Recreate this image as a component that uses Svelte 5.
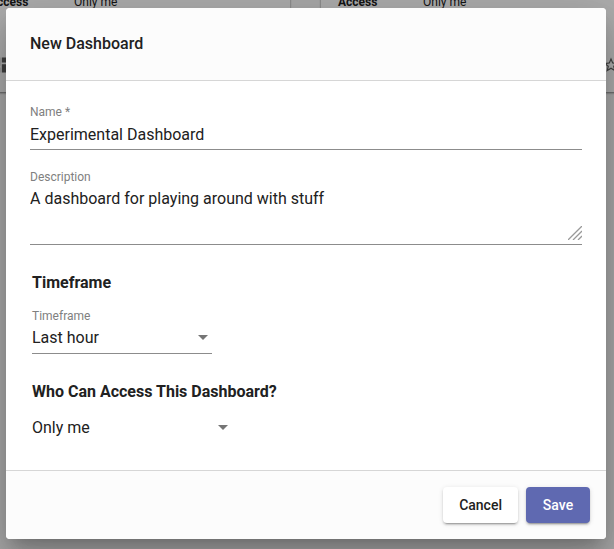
<script>
  let name = $state('Experimental Dashboard');
  let description = $state('A dashboard for playing around with stuff');
  let timeframe = $state('Last hour');
  let access = $state('Only me');
  const cards = [1, 2];
</script>

<div class="page">
  <div class="behind" aria-hidden="true">
    {#each cards as card (card)}
      <article>
        <dl><dt>Access</dt><dd>Only me</dd></dl>
        <footer>
          <svg width="20" height="20" viewBox="0 0 24 24"><path d="M3 13h8V3H3v10zm0 8h8v-6H3v6zm10 0h8V11h-8v10zm0-18v6h8V3h-8z" /></svg>
          <svg width="18" height="18" viewBox="0 0 24 24"><path d="M22 9.24l-7.19-.62L12 2 9.19 8.63 2 9.24l5.46 4.73L5.82 21 12 17.27 18.18 21l-1.63-7.03L22 9.24zM12 15.4l-3.76 2.27 1-4.28-3.32-2.88 4.38-.38L12 6.1l1.71 4.04 4.38.38-3.32 2.88 1 4.28L12 15.4z" /></svg>
        </footer>
      </article>
    {/each}
  </div>

  <div class="scrim">
    <form class="dialog" role="dialog" aria-labelledby="title" onsubmit={(e) => e.preventDefault()}>
      <header><h1 id="title">New Dashboard</h1></header>
      <div class="body">
        <div class="field">
          <label for="name">Name *</label>
          <input id="name" type="text" required bind:value={name} />
        </div>
        <div class="field area">
          <label for="description">Description</label>
          <textarea id="description" bind:value={description}></textarea>
          <svg class="grip" width="14" height="14" viewBox="0 0 14 14"><path d="M0 14L14 0M5 14l9-9M10 14l4-4" /></svg>
        </div>
        <section>
          <h2>Timeframe</h2>
          <div class="field select">
            <label for="timeframe">Timeframe</label>
            <select id="timeframe" bind:value={timeframe}>
              <option>Last hour</option>
              <option>Last day</option>
              <option>Last week</option>
            </select>
            <svg class="arrow" width="10" height="5" viewBox="0 0 10 5"><path d="M0 0h10L5 5z" /></svg>
          </div>
        </section>
        <section class="access">
          <h2 id="access-title">Who Can Access This Dashboard?</h2>
          <div class="field select plain">
            <select aria-labelledby="access-title" bind:value={access}>
              <option>Only me</option>
              <option>Everyone</option>
            </select>
            <svg class="arrow" width="10" height="5" viewBox="0 0 10 5"><path d="M0 0h10L5 5z" /></svg>
          </div>
        </section>
      </div>
      <div class="actions">
        <button type="button">Cancel</button>
        <button type="submit" class="primary">Save</button>
      </div>
    </form>
  </div>
</div>

<style>
  :global(body) { margin: 0; background: #fafafa; }
  .page, .page * { box-sizing: border-box; }
  .page {
    position: relative;
    min-height: 100vh;
    overflow: hidden;
    font-family: Roboto, 'Liberation Sans', sans-serif;
    color: #212121;
  }
  .behind {
    position: absolute;
    inset: -8px 0 auto -28px;
    display: flex;
    gap: 31px;
  }
  article {
    flex: none;
    width: 318px;
    background: #fff;
    box-shadow: 0 1px 2px rgba(0, 0, 0, 0.5);
  }
  dl { display: flex; margin: 0; padding: 2px 17px 0; font-size: 12px; line-height: 16px; }
  dt { width: 85px; font-weight: 700; }
  dd { margin: 0; }
  article footer {
    display: flex;
    justify-content: space-between;
    align-items: center;
    height: 82px;
    padding: 28px 19px 0;
  }
  article footer svg { fill: #616161; }
  .scrim {
    position: relative;
    display: flex;
    align-items: center;
    justify-content: center;
    min-height: 100vh;
    padding: 8px 8px 10px 6px;
    background: rgba(0, 0, 0, 0.32);
  }
  .dialog {
    width: 100%;
    max-width: 600px;
    border-radius: 4px;
    background: #fff;
    overflow: hidden;
    box-shadow: 0 11px 15px -7px rgba(0, 0, 0, 0.2), 0 24px 38px 3px rgba(0, 0, 0, 0.14), 0 9px 46px 8px rgba(0, 0, 0, 0.12);
  }
  header { padding: 24px; background: #fcfcfc; border-bottom: 1px solid #d6d6d6; }
  h1 { margin: 0; font-size: 16px; font-weight: 500; line-height: 24px; }
  .body { padding: 24px 24px 26px; }
  .field { position: relative; }
  label { display: block; font-size: 12px; line-height: 14px; color: #808080; }
  input, textarea, select {
    display: block;
    width: 100%;
    margin: 0;
    padding: 0;
    border: 0;
    border-bottom: 1px solid #8c8c8c;
    border-radius: 0;
    outline: 0;
    background: transparent;
    color: inherit;
    font: 16px/24px Roboto, 'Liberation Sans', sans-serif;
  }
  input, select { height: 31px; }
  input { padding: 3px 0; }
  .area { margin-top: 20px; }
  textarea { height: 61px; padding-top: 3px; resize: none; }
  .grip { position: absolute; right: 0; bottom: 5px; stroke: #999; fill: none; stroke-width: 1.3; }
  section { padding-left: 2px; }
  h2 { margin: 26px 0 14px; font-size: 16px; font-weight: 700; line-height: 24px; }
  .access h2 { margin-bottom: 9px; }
  .select { width: 180px; }
  select { appearance: none; }
  .arrow { position: absolute; right: 4px; bottom: 14px; fill: #757575; pointer-events: none; }
  .plain { width: 200px; }
  .plain select { border-color: transparent; }
  .actions {
    display: flex;
    justify-content: flex-end;
    gap: 8px;
    padding: 16px;
    background: #fcfcfc;
    border-top: 1px solid #d6d6d6;
  }
  button {
    min-width: 64px;
    height: 36px;
    padding: 0 16px;
    border: 0;
    border-radius: 4px;
    background: #fff;
    color: #212121;
    font: 500 14px/36px Roboto, 'Liberation Sans', sans-serif;
    box-shadow: 0 3px 1px -2px rgba(0, 0, 0, 0.2), 0 2px 2px rgba(0, 0, 0, 0.14), 0 1px 5px rgba(0, 0, 0, 0.12);
  }
  .primary { background: #5f69b1; color: #fff; }
</style>
